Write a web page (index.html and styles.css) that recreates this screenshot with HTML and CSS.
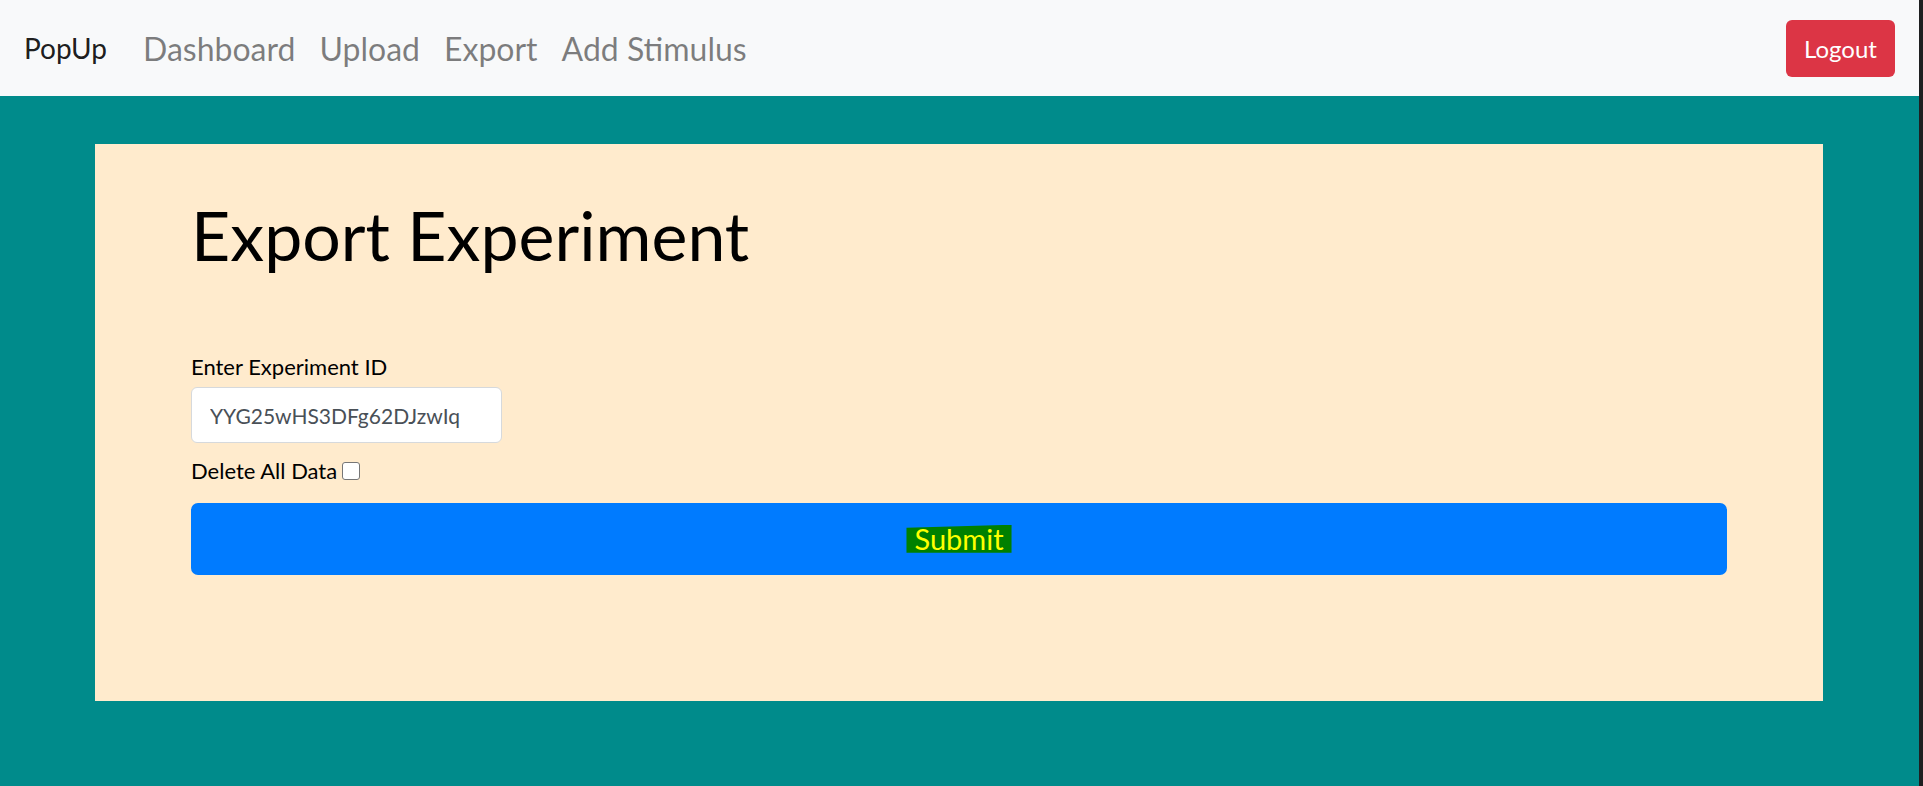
FILE: index.html
```html
<!DOCTYPE html>
<html lang="en">
<head>
<meta charset="utf-8">
<title>PopUp - Export</title>
<link rel="stylesheet" href="styles.css">
</head>
<body>
<div class="window">
  <nav class="navbar">
    <div class="nav-left">
      <a class="brand" href="#">PopUp</a>
      <ul class="nav-links">
        <li><a class="nav-link" href="#">Dashboard</a></li>
        <li><a class="nav-link" href="#">Upload</a></li>
        <li><a class="nav-link" href="#">Export</a></li>
        <li><a class="nav-link" href="#">Add Stimulus</a></li>
      </ul>
    </div>
    <button class="btn-logout" type="button">Logout</button>
  </nav>
  <main class="page">
    <section class="card">
      <h1 class="title">Export Experiment</h1>
      <form class="export-form">
        <label class="field-label" for="exp-id">Enter Experiment ID</label>
        <input class="text-input" id="exp-id" type="text" value="YYG25wHS3DFg62DJzwIq">
        <label class="check-row">Delete All Data <input class="check" type="checkbox"></label>
        <button class="btn-submit" type="button"><span class="highlight">Submit</span></button>
      </form>
    </section>
  </main>
</div>
</body>
</html>
```
FILE: styles.css
```css
html, body {
  margin: 0;
  padding: 0;
}
body {
  background: #1e1f20;
  font-family: "Lato", "Open Sans", sans-serif;
  color: #000;
}
.window {
  margin-right: 4px;
  min-height: 100vh;
  background: #008b8b;
}
.navbar {
  box-sizing: border-box;
  height: 96px;
  padding: 0 24px;
  display: flex;
  align-items: center;
  justify-content: space-between;
  background: #f8f9fa;
}
.nav-left {
  display: flex;
  align-items: center;
}
.brand {
  font-size: 28px;
  color: rgba(0, 0, 0, 0.9);
  text-decoration: none;
  margin-right: 24px;
}
.nav-links {
  display: flex;
  list-style: none;
  margin: 0;
  padding: 0;
}
.nav-link {
  display: block;
  padding: 0 12px;
  font-size: 32px;
  color: rgba(0, 0, 0, 0.5);
  text-decoration: none;
}
.btn-logout {
  box-sizing: border-box;
  width: 109px;
  height: 57px;
  border: none;
  border-radius: 6px;
  background: #dc3545;
  color: #fff;
  font-family: inherit;
  font-size: 24px;
  padding: 0;
}
.page {
  padding: 48px 96px 85px 95px;
}
.card {
  background: #ffebcd;
  padding: 50px 96px 126px 96px;
}
.title {
  margin: 0;
  font-size: 68px;
  font-weight: 400;
  line-height: 1.2;
}
.export-form {
  display: flex;
  flex-direction: column;
  align-items: flex-start;
  margin-top: 74px;
  font-size: 22px;
  line-height: 1.57;
}
.field-label {
  margin-bottom: 3px;
}
.text-input {
  box-sizing: border-box;
  width: 311px;
  height: 56px;
  padding: 0 18px;
  border: 1px solid #d6d9dc;
  border-radius: 6px;
  background: #fff;
  color: #495057;
  font-family: inherit;
  font-size: 21px;
}
.check-row {
  display: flex;
  align-items: center;
  gap: 5px;
  margin-top: 11px;
}
.check {
  appearance: none;
  -webkit-appearance: none;
  box-sizing: border-box;
  width: 18px;
  height: 18px;
  margin: 0;
  border: 1px solid #767676;
  border-radius: 3px;
  background: #fff;
}
.btn-submit {
  align-self: stretch;
  height: 72px;
  margin-top: 14px;
  border: none;
  border-radius: 7px;
  background: #007bff;
  font-family: inherit;
  padding: 0;
}
.highlight {
  display: inline-block;
  padding: 0 8px;
  line-height: 28px;
  font-size: 29px;
  color: #ffff00;
  background: #008000;
  clip-path: polygon(0 3px, 100% 0, 100% 100%, 0 100%);
}
```
